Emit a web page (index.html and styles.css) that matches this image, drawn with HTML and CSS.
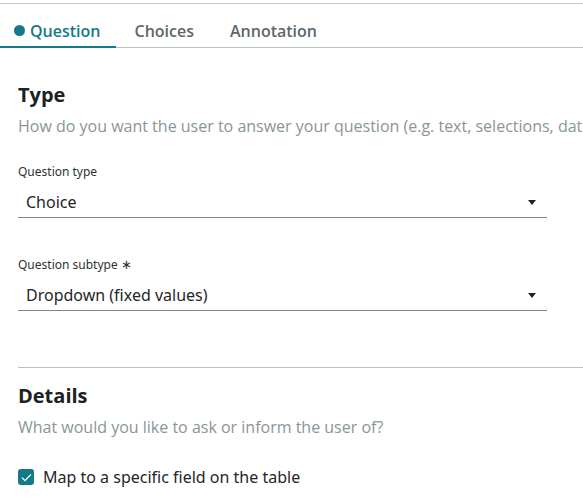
FILE: index.html
```html
<!DOCTYPE html>
<html>
<head>
<meta charset="utf-8">
<link rel="stylesheet" href="styles.css">
</head>
<body>
<div class="panel">
  <nav class="tabs">
    <div class="tab active"><span class="dot"></span>Question</div>
    <div class="tab">Choices</div>
    <div class="tab">Annotation</div>
  </nav>
  <div class="content">
    <section class="section">
      <h2 class="heading">Type</h2>
      <p class="sub">How do you want the user to answer your question (e.g. text, selections, dates, numbers)?</p>
      <div class="field">
        <div class="label">Question type</div>
        <div class="select"><span>Choice</span><span class="caret"></span></div>
      </div>
      <div class="field">
        <div class="label">Question subtype <span class="req">∗</span></div>
        <div class="select"><span>Dropdown (fixed values)</span><span class="caret"></span></div>
      </div>
    </section>
    <section class="section details">
      <h2 class="heading">Details</h2>
      <p class="sub">What would you like to ask or inform the user of?</p>
      <label class="check">
        <span class="box"><svg width="11" height="9" viewBox="0 0 11 9"><path d="M1 4.6 L4 7.6 L10 1.4" fill="none" stroke="#fff" stroke-width="1.3"/></svg></span>
        Map to a specific field on the table
      </label>
    </section>
  </div>
</div>
</body>
</html>
```

FILE: styles.css
```css
* { box-sizing: border-box; }
html, body { margin: 0; padding: 0; background: #fff; }
body {
  font-family: "Open Sans", "Noto Sans", sans-serif;
  color: #1f2628;
  overflow: hidden;
  width: 583px;
  height: 504px;
}
.panel {
  margin-top: 3px;
  border-top: 1px solid #c4c8ca;
}
.tabs {
  display: flex;
  height: 44px;
  border-bottom: 1px solid #b9bfc1;
}
.tab {
  display: flex;
  align-items: center;
  font-size: 16px;
  font-weight: 600;
  color: #5c686c;
  padding: 11px 18px 0;
  margin-bottom: -1px;
  border-bottom: 2px solid transparent;
}
.tab.active {
  color: #137a8a;
  border-bottom-color: #137a8a;
  padding-left: 14px;
  padding-right: 16px;
}
.dot {
  flex-shrink: 0;
  width: 11px;
  height: 11px;
  border-radius: 50%;
  background: #137a8a;
  margin-right: 5px;
}
.content {
  padding-left: 18px;
}
.section {
  padding-top: 34px;
}
.heading {
  margin: 0;
  font-size: 20px;
  font-weight: 700;
  line-height: 26px;
  color: #1b2224;
}
.sub {
  margin: 6px 0 0;
  font-size: 16px;
  line-height: 24px;
  color: #8a9598;
  white-space: nowrap;
  overflow: hidden;
}
.field {
  width: 529px;
  margin-top: 26px;
}
.field + .field { margin-top: 38px; }
.label {
  font-family: "Noto Sans", sans-serif;
  font-size: 12px;
  line-height: 16px;
  color: #2b3335;
}
.req { font-size: 13px; }
.select {
  display: flex;
  align-items: center;
  justify-content: space-between;
  height: 38px;
  padding: 7px 11px 0 8px;
  border-bottom: 1px solid #7f8a8d;
  font-family: "Noto Sans", sans-serif;
  font-size: 16px;
  color: #1f2628;
}
.caret {
  width: 0;
  height: 0;
  border-left: 4px solid transparent;
  border-right: 4px solid transparent;
  border-top: 5px solid #222;
}
.details {
  margin-top: 56px;
  border-top: 1px solid #b9bfc1;
  padding-top: 15px;
}
.check {
  display: flex;
  align-items: center;
  margin-top: 26px;
  line-height: 24px;
  font-family: "Noto Sans", sans-serif;
  font-size: 16px;
  color: #1f2628;
}
.box {
  flex-shrink: 0;
  width: 16px;
  height: 16px;
  border-radius: 3px;
  background: #137a8a;
  display: flex;
  align-items: center;
  justify-content: center;
  margin-right: 9px;
}
```
